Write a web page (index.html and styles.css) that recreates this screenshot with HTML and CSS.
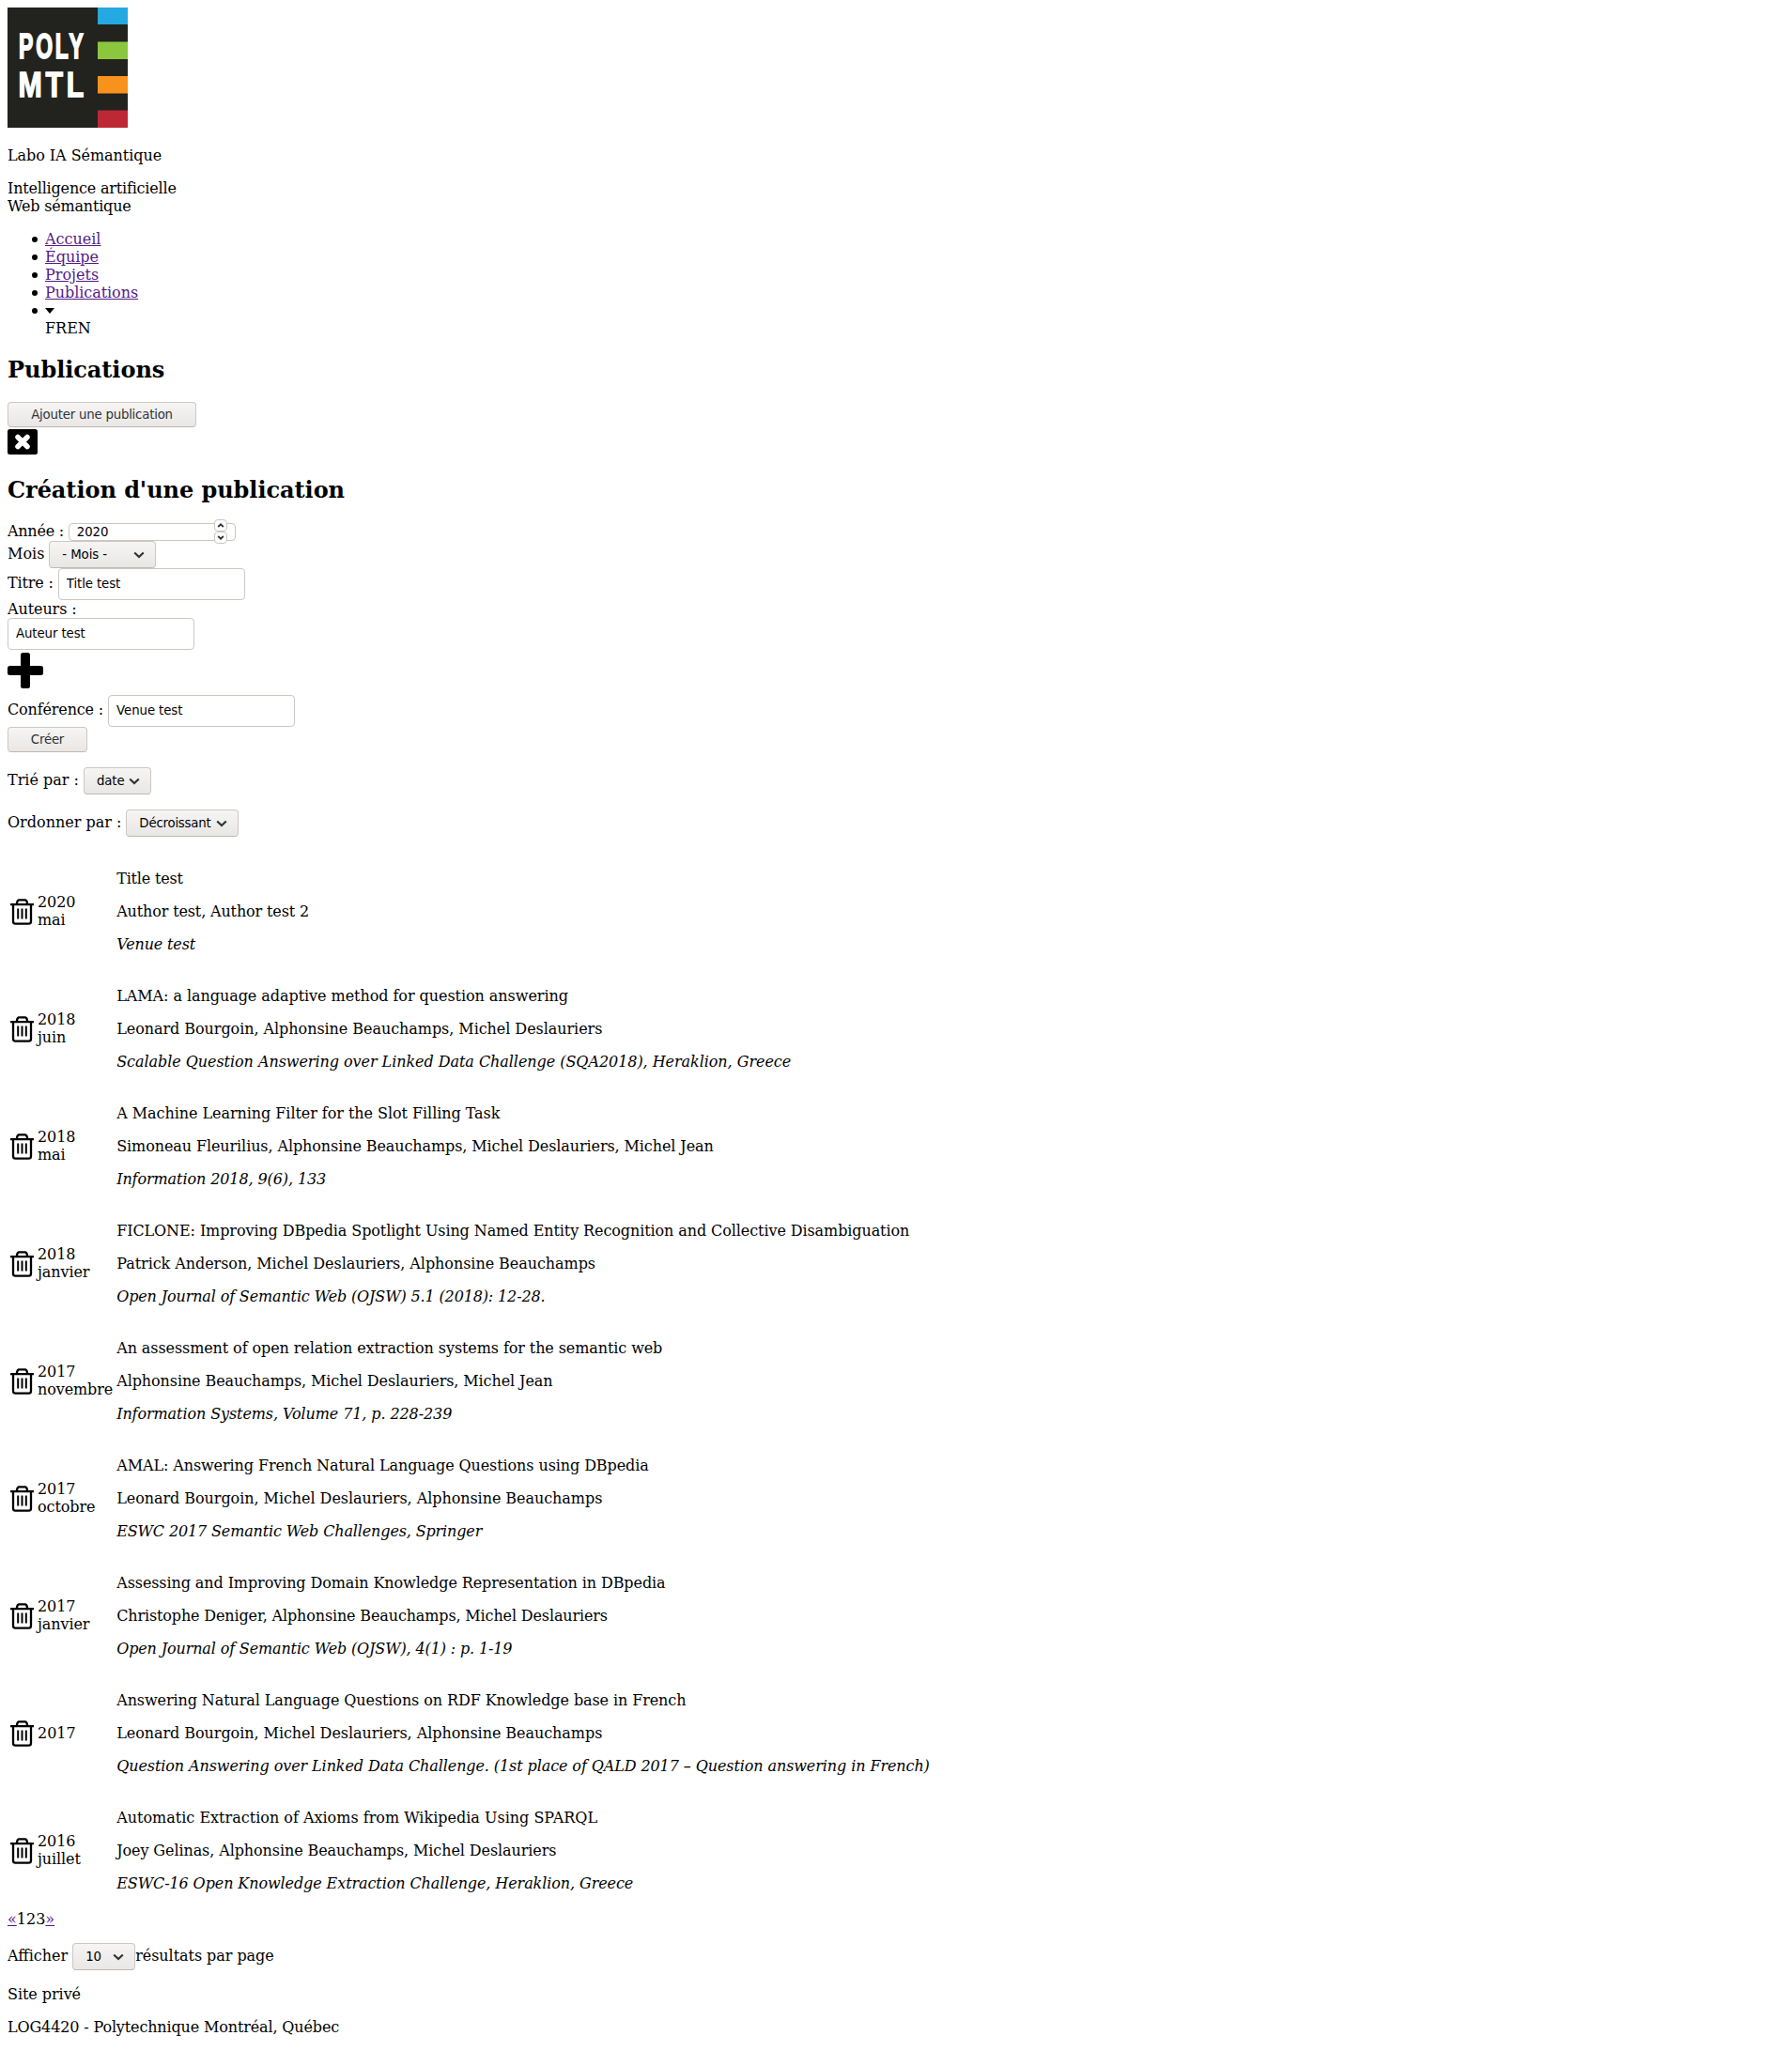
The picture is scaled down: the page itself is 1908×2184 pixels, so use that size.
FILE: index.html
```
<!DOCTYPE html>
<html lang="fr">
<head>
<meta charset="utf-8">
<title>Publications</title>
<link rel="stylesheet" href="styles.css">
</head>
<body>
<svg width="0" height="0" class="defs">
  <symbol id="trash" viewBox="0 0 25 28"><path d="M0 6.2H25M7 6V4.5Q7.5 1.6 9 1.3H16Q17.500 1.600 18 4.500V6M3 6V24Q3 26.700 5.500 26.700H19.500Q22 26.700 22 24V6" fill="none" stroke="#000" stroke-width="2.300"/><path d="M8.200 10.500V21.500M12.500 10.500V21.500M16.800 10.500V21.500" stroke="#000" stroke-width="2"/></symbol>
  <symbol id="chevron" viewBox="0 0 12 8"><path d="M1.200 1.500L6 6L10.800 1.500" fill="none" stroke="#2e3436" stroke-width="2.200"/></symbol>
</svg>
<header>
  <svg class="logo" viewBox="0 0 128 128" role="img" aria-label="Polytechnique Montréal">
    <rect width="128" height="128" fill="#22221e"/>
    <rect x="96" width="32" height="18" fill="#25a9e0"/>
    <rect x="96" y="36.500" width="32" height="18.500" fill="#8cc63e"/>
    <rect x="96" y="73" width="32" height="18.500" fill="#f7931d"/>
    <rect x="96" y="109.500" width="32" height="18.500" fill="#be2835"/>
    <g class="logo-text">
      <text class="poly" transform="scale(0.62 1)" x="19.500" y="54">POLY</text>
      <text class="mtl" transform="scale(0.82 1)" x="14" y="95">MTL</text>
    </g>
  </svg>
  <p class="t1">Labo IA Sémantique</p>
  <p class="t4">Intelligence artificielle<br>Web sémantique</p>
</header>
<nav>
  <ul>
    <li><a href="#">Accueil</a></li>
    <li><a href="#">Équipe</a></li>
    <li><a href="#">Projets</a></li>
    <li class="t1"><a href="#">Publications</a></li>
    <li><svg class="caret" viewBox="0 0 10 5" preserveAspectRatio="none"><path d="M0 0H10L5 5Z"/></svg><div>FREN</div></li>
  </ul>
</nav>
<main>
  <h2>Publications</h2>
  <button class="add">Ajouter une publication</button>
  <div class="close"><svg width="32" height="27" viewBox="0 0 32 27"><rect width="32" height="27" rx="2.500"/><path d="M11 8.500L21 18.500M21 8.500L11 18.500" stroke="#fff" stroke-width="5.500" stroke-linecap="round"/></svg></div>
  <h2 class="create-title">Création d'une publication</h2>
  <form>
    <div class="row year"><label for="y">Année :</label><div class="number"><input id="y" value="2020"><div class="spin"><span><svg viewBox="0 0 8 5"><path d="M1.200 4L4 1.300L6.800 4"/></svg></span><span><svg viewBox="0 0 8 5"><path d="M1.200 1L4 3.700L6.800 1"/></svg></span></div></div></div>
    <div class="row"><label>Mois</label><div class="select month">- Mois -<svg><use href="#chevron"/></svg></div></div>
    <div class="row field"><label for="t">Titre :</label><input id="t" value="Title test"></div>
    <div class="t2">Auteurs :</div>
    <div class="row"><input value="Auteur test" aria-label="Auteur"></div>
    <div class="plus"><svg width="38" height="38" viewBox="0 0 38 38"><rect x="14" width="10" height="38" rx="2.500"/><rect y="14" width="38" height="10" rx="2.500"/></svg></div>
    <div class="row field"><label for="v">Conférence :</label><input id="v" value="Venue test"></div>
    <button class="create" type="button">Créer</button>
  </form>
  <div class="row sort"><label>Trié par :</label><div class="select by">date<svg><use href="#chevron"/></svg></div></div>
  <div class="row sort"><label>Ordonner par :</label><div class="select order">Décroissant<svg><use href="#chevron"/></svg></div></div>
  <table>
    <tr><td><svg class="trash"><use href="#trash"/></svg></td><td class="date">2020<br>mai</td><td><p class="t4">Title test</p><p class="t3">Author test, Author test 2</p><p class="t3"><em>Venue test</em></p></td></tr>
    <tr><td><svg class="trash"><use href="#trash"/></svg></td><td class="date">2018<br>juin</td><td><p class="t1">LAMA: a language adaptive method for question answering</p><p class="t1">Leonard Bourgoin, Alphonsine Beauchamps, Michel Deslauriers</p><p class="t1"><em>Scalable Question Answering over Linked Data Challenge (SQA2018), Heraklion, Greece</em></p></td></tr>
    <tr><td><svg class="trash"><use href="#trash"/></svg></td><td class="date">2018<br>mai</td><td><p class="t1">A Machine Learning Filter for the Slot Filling Task</p><p class="t2">Simoneau Fleurilius, Alphonsine Beauchamps, Michel Deslauriers, Michel Jean</p><p class="t2"><em>Information 2018, 9(6), 133</em></p></td></tr>
    <tr><td><svg class="trash"><use href="#trash"/></svg></td><td class="date">2018<br>janvier</td><td><p class="t2">FICLONE: Improving DBpedia Spotlight Using Named Entity Recognition and Collective Disambiguation</p><p class="t1">Patrick Anderson, Michel Deslauriers, Alphonsine Beauchamps</p><p class="t3"><em>Open Journal of Semantic Web (OJSW) 5.1 (2018): 12-28.</em></p></td></tr>
    <tr><td><svg class="trash"><use href="#trash"/></svg></td><td class="date">2017<br>novembre</td><td><p class="t2">An assessment of open relation extraction systems for the semantic web</p><p class="t2">Alphonsine Beauchamps, Michel Deslauriers, Michel Jean</p><p class="t2"><em>Information Systems, Volume 71, p. 228-239</em></p></td></tr>
    <tr><td><svg class="trash"><use href="#trash"/></svg></td><td class="date">2017<br>octobre</td><td><p class="t2">AMAL: Answering French Natural Language Questions using DBpedia</p><p class="t1">Leonard Bourgoin, Michel Deslauriers, Alphonsine Beauchamps</p><p class="t3"><em>ESWC 2017 Semantic Web Challenges, Springer</em></p></td></tr>
    <tr><td><svg class="trash"><use href="#trash"/></svg></td><td class="date">2017<br>janvier</td><td><p class="t2">Assessing and Improving Domain Knowledge Representation in DBpedia</p><p class="t3">Christophe Deniger, Alphonsine Beauchamps, Michel Deslauriers</p><p class="t3"><em>Open Journal of Semantic Web (OJSW), 4(1) : p. 1-19</em></p></td></tr>
    <tr><td><svg class="trash"><use href="#trash"/></svg></td><td>2017</td><td><p class="t2">Answering Natural Language Questions on RDF Knowledge base in French</p><p class="t1">Leonard Bourgoin, Michel Deslauriers, Alphonsine Beauchamps</p><p class="t2"><em>Question Answering over Linked Data Challenge. (1st place of QALD 2017 – Question answering in French)</em></p></td></tr>
    <tr><td><svg class="trash"><use href="#trash"/></svg></td><td class="date">2016<br>juillet</td><td><p>Automatic Extraction of Axioms from Wikipedia Using SPARQL</p><p class="t2">Joey Gelinas, Alphonsine Beauchamps, Michel Deslauriers</p><p class="t2"><em>ESWC-16 Open Knowledge Extraction Challenge, Heraklion, Greece</em></p></td></tr>
  </table>
  <div><a href="#">«</a>123<a href="#">»</a></div>
  <div class="row sort"><label>Afficher</label><div class="select count">10<svg><use href="#chevron"/></svg></div><span class="after">résultats par page</span></div>
</main>
<footer><p class="t1">Site privé</p><p class="t3">LOG4420 - Polytechnique Montréal, Québec</p></footer>
</body>
</html>
```
FILE: styles.css
```
body { margin: 8px; background: #fff; color: #000; font: 16px/19px "DejaVu Serif", serif; }
.defs { display: none; }
.logo { display: block; width: 128px; height: 128px; margin-bottom: 20px; }
.logo-text { font: bold 37px "Liberation Sans", sans-serif; fill: #fff; stroke: #fff; }
.poly { stroke-width: 1.8px; letter-spacing: 4.5px; }
.mtl { stroke-width: 1.4px; letter-spacing: 4.5px; }
p { margin: 16px 0; }
/* tracking steps */
.t1 { letter-spacing: -0.055px; }
.t2 { letter-spacing: -0.095px; }
.t3 { letter-spacing: -0.14px; }
.t4 { letter-spacing: -0.19px; }
ul { margin: 16px 0 21px; padding-left: 40px; list-style: none; }
li::before { content: ""; display: inline-block; width: 6px; height: 6px; margin: 0 8px 0 -14px; border-radius: 50%; background: #000; vertical-align: 2px; }
a { color: #551a8b; text-decoration: underline; }
.caret { display: inline-block; width: 10px; height: 6px; vertical-align: 2px; }
h2 { margin: 20px 0; font-size: 24px; line-height: 28px; letter-spacing: -0.05px; }
.create-title { margin-top: 22px; }
button, input, .select { box-sizing: border-box; font: 13.333px "DejaVu Sans", sans-serif; letter-spacing: -0.1px; border: 1px solid #cdc7c2; border-radius: 4px; }
button, .select { background: linear-gradient(#f6f5f4, #e9e7e6); border-bottom-color: #bfb8b1; }
button { display: block; height: 27px; padding: 0; color: #2e3436; letter-spacing: -0.22px; }
.add { width: 201px; }
.create { width: 85px; }
.close { height: 29px; padding-top: 2px; }
.close svg, .plus svg { display: block; }
.row { display: flex; align-items: flex-start; }
.row label { padding: 4px 5px 0 0; }
.field label { padding-top: 6px; letter-spacing: -0.15px; }
input { width: 199px; height: 34px; margin: 0; padding: 0 8px 2px; background: #fff; color: #000; }
.year { height: 20px; }
.year label { padding-top: 0; letter-spacing: -0.25px; }
.number { position: relative; margin-top: 1px; }
.number input { display: block; width: 178px; height: 19px; padding-bottom: 0; }
.spin { position: absolute; right: 9px; top: -4px; width: 14px; }
.spin span { display: flex; align-items: center; justify-content: center; box-sizing: border-box; height: 13px; border: 1px solid #cdc7c2; border-radius: 4px; background: #fff; }
.spin svg { width: 8px; height: 5px; fill: none; stroke: #2e3436; stroke-width: 1.8; }
.select { display: flex; align-items: center; justify-content: space-between; height: 29px; padding: 0 11px 0 13px; }
.select svg { width: 12px; height: 8px; }
.month { width: 114px; }
.by { width: 72px; }
.order { width: 120px; letter-spacing: -0.22px; }
.count { width: 67px; }
.plus { padding: 3px 0 7px; }
.sort { margin: 16px 0; }
.after { padding-top: 4px; letter-spacing: -0.05px; }
table { border-spacing: 2px; }
td { padding: 1px; vertical-align: middle; }
.date { padding-bottom: 2px; letter-spacing: -0.1px; }
.trash { display: block; width: 25px; height: 28px; }
```
